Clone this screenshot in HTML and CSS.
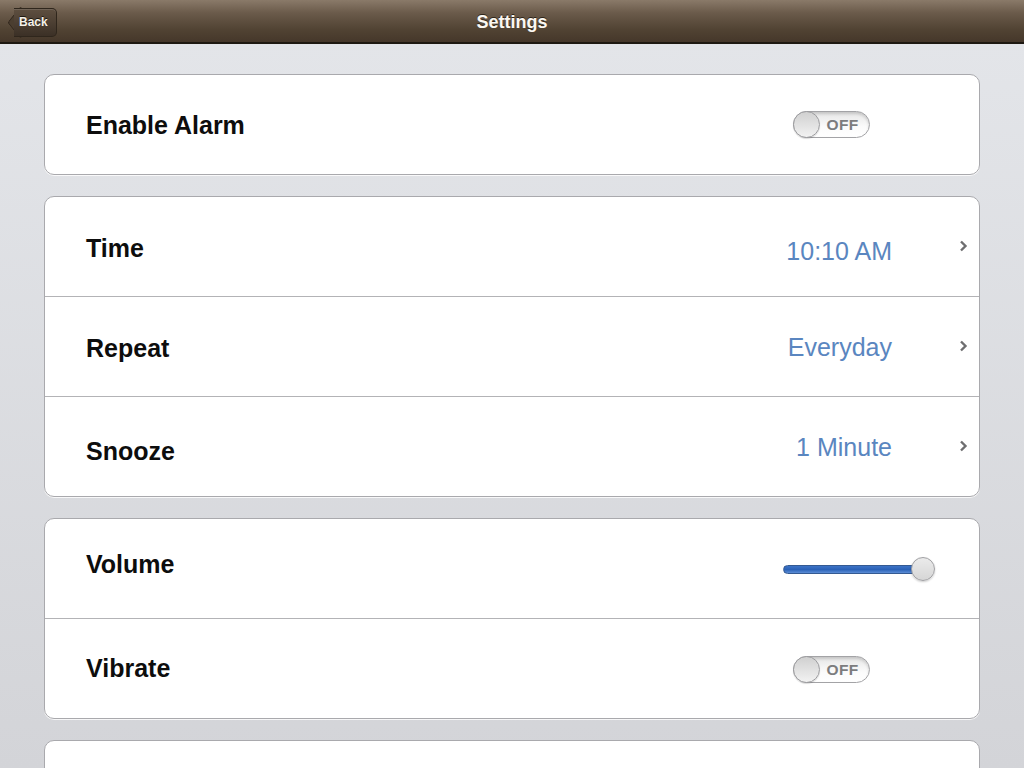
FILE: index.html
```html
<!DOCTYPE html>
<html>
<head>
<meta charset="utf-8">
<link rel="stylesheet" href="styles.css">
</head>
<body>
<header class="navbar">
  <button class="back"><span class="back-tip"></span><span class="back-label">Back</span></button>
  <h1 class="title">Settings</h1>
</header>
<main class="content">
  <section class="group">
    <div class="row">
      <span class="label l-enable">Enable Alarm</span>
      <span class="switch"><span class="knob"></span><span class="switch-text">OFF</span></span>
    </div>
  </section>
  <section class="group">
    <div class="row">
      <span class="label l-time">Time</span>
      <span class="value v-time">10:10 AM</span>
      <svg class="chev" width="9" height="12" viewBox="0 0 9 12"><path d="M2 1.5 L6.5 6 L2 10.5" fill="none" stroke="#6e6e70" stroke-width="2.4"/></svg>
    </div>
    <div class="row">
      <span class="label l-repeat">Repeat</span>
      <span class="value">Everyday</span>
      <svg class="chev" width="9" height="12" viewBox="0 0 9 12"><path d="M2 1.5 L6.5 6 L2 10.5" fill="none" stroke="#6e6e70" stroke-width="2.4"/></svg>
    </div>
    <div class="row">
      <span class="label l-snooze">Snooze</span>
      <span class="value">1 Minute</span>
      <svg class="chev" width="9" height="12" viewBox="0 0 9 12"><path d="M2 1.5 L6.5 6 L2 10.5" fill="none" stroke="#6e6e70" stroke-width="2.4"/></svg>
    </div>
  </section>
  <section class="group">
    <div class="row">
      <span class="label l-volume">Volume</span>
      <span class="slider"><span class="track"></span><span class="thumb"></span></span>
    </div>
    <div class="row">
      <span class="label l-vibrate">Vibrate</span>
      <span class="switch sw-low"><span class="knob"></span><span class="switch-text">OFF</span></span>
    </div>
  </section>
  <section class="group">
    <div class="row"></div>
  </section>
</main>
</body>
</html>
```
FILE: styles.css
```css
* { box-sizing: border-box; }
html, body { margin: 0; padding: 0; }
body {
  width: 1024px;
  height: 768px;
  overflow: hidden;
  font-family: "Liberation Sans", Arial, sans-serif;
  background: linear-gradient(#e4e6ea, #d3d4d8);
}
.navbar {
  height: 44px;
  position: relative;
  display: flex;
  align-items: center;
  justify-content: center;
  background: linear-gradient(#8a7a69 0%, #6b5b4b 30%, #514333 70%, #45372a 100%);
  border-bottom: 2px solid #1e1912;
}
.title {
  margin: 0;
  color: #fbf8f2;
  font-size: 18px;
  font-weight: bold;
  text-shadow: 0 -1px 0 #2e2519;
  padding-top: 3px;
}
.back {
  position: absolute;
  left: 7px;
  top: 8px;
  height: 29px;
  width: 50px;
  padding: 0;
  border: none;
  background: none;
  display: flex;
  align-items: center;
}
.back-tip {
  width: 21px;
  height: 21px;
  transform: rotate(45deg) skew(6deg, 6deg);
  margin-right: -17px;
  background: #4b3e30;
  border-left: 1px solid #33291f;
  border-bottom: 1px solid #33291f;
  border-radius: 3px;
  margin-left: 3px;
}
.back-label {
  position: relative;
  height: 29px;
  flex: 1;
  background: linear-gradient(#5e4f40, #3b3026);
  border: 1px solid #2f261c;
  border-left: none;
  border-radius: 0 5px 5px 0;
  color: #f4f1ea;
  font-size: 12px;
  font-weight: bold;
  line-height: 27px;
  text-align: left;
  padding-left: 5px;
  text-shadow: 0 -1px 0 #1d170f;
  box-shadow: inset 0 1px 0 rgba(255,255,255,0.12);
}
.content {
  height: 724px;
  overflow: hidden;
  padding: 30px 44px 0 44px;
  display: flex;
  flex-direction: column;
  gap: 21px;
}
.group {
  background: #fff;
  border: 1px solid #a9a9ad;
  border-radius: 10px;
  box-shadow: 0 1px 0 rgba(255,255,255,0.8);
  overflow: hidden;
  flex-shrink: 0;
}
.row {
  height: 100px;
  display: flex;
  align-items: center;
  padding: 0 0 0 41px;
  border-top: 1px solid #b3b3b6;
}
.row:first-child { border-top: none; height: 99px; }
.label {
  flex: 1;
  font-size: 25px;
  font-weight: bold;
  color: #0d0d0d;
}
.l-enable { padding-top: 2px; }
.l-time { padding-top: 4px; }
.l-repeat { padding-top: 4px; }
.l-snooze { padding-top: 10px; }
.l-volume { padding-bottom: 8px; }
.l-vibrate { padding-top: 0; }
.value {
  font-size: 25px;
  color: #5a86c0;
  margin-right: 67px;
  padding-top: 2px;
}
.v-time { padding-top: 10px; }
.chev { margin-right: 11px; margin-top: -1px; }
.switch {
  width: 77px;
  height: 27px;
  border-radius: 14px;
  border: 1px solid #a3a3a6;
  background: linear-gradient(#e6e6e6, #fbfbfb 60%, #ffffff);
  box-shadow: inset 0 2px 3px rgba(0,0,0,0.15);
  margin-right: 109px;
  display: flex;
  align-items: center;
  position: relative;
}
.sw-low { margin-top: 2px; }
.knob {
  width: 27px;
  height: 27px;
  border-radius: 50%;
  margin-left: -1px;
  background: linear-gradient(#d0d0d0, #f2f2f2);
  border: 1px solid #9c9c9f;
  box-shadow: 0 1px 1px rgba(0,0,0,0.15);
}
.switch-text {
  flex: 1;
  text-align: center;
  font-size: 15.5px;
  font-weight: bold;
  color: #7c7c7e;
  padding-right: 4px;
  letter-spacing: 0.3px;
}
.slider {
  width: 152px;
  height: 24px;
  margin-right: 44px;
  position: relative;
  display: flex;
  align-items: center;
  margin-top: 1px;
}
.track {
  width: 142px;
  height: 9px;
  border-radius: 5px;
  background: linear-gradient(#3d73c6, #2b62b7 50%, #5b8dd6);
  border: 1px solid #345a92;
}
.thumb {
  position: absolute;
  right: 0;
  top: 0;
  width: 24px;
  height: 24px;
  border-radius: 50%;
  background: linear-gradient(#ebebeb, #d6d6d6);
  border: 1px solid #a0a0a3;
  box-shadow: 0 1px 2px rgba(0,0,0,0.2);
}
```
